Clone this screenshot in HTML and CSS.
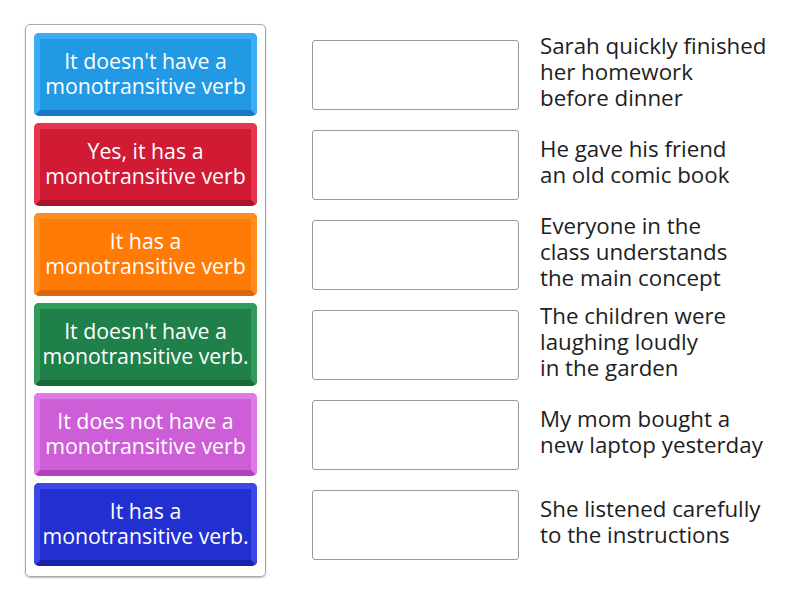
FILE: index.html
```html
<!DOCTYPE html>
<html>
<head>
<meta charset="utf-8">
<link rel="stylesheet" href="styles.css">
</head>
<body>
<div class="page">
  <div class="bank">
    <div class="tile blue">It doesn't have a<br>monotransitive verb</div>
    <div class="tile red">Yes, it has a<br>monotransitive verb</div>
    <div class="tile orange">It has a<br>monotransitive verb</div>
    <div class="tile green">It doesn't have a<br>monotransitive verb.</div>
    <div class="tile pink">It does not have a<br>monotransitive verb</div>
    <div class="tile navy">It has a<br>monotransitive verb.</div>
  </div>
  <div class="targets">
    <div class="row"><div class="slot"></div><div class="clue">Sarah quickly finished<br>her homework<br>before dinner</div></div>
    <div class="row"><div class="slot"></div><div class="clue">He gave his friend<br>an old comic book</div></div>
    <div class="row"><div class="slot"></div><div class="clue">Everyone in the<br>class understands<br>the main concept</div></div>
    <div class="row"><div class="slot"></div><div class="clue">The children were<br>laughing loudly<br>in the garden</div></div>
    <div class="row"><div class="slot"></div><div class="clue">My mom bought a<br>new laptop yesterday</div></div>
    <div class="row"><div class="slot"></div><div class="clue">She listened carefully<br>to the instructions</div></div>
  </div>
</div>
</body>
</html>
```

FILE: styles.css
```css
html, body {
  margin: 0;
  padding: 0;
  background: #ffffff;
}
body {
  font-family: "Open Sans", Lato, sans-serif;
  width: 800px;
  height: 600px;
  overflow: hidden;
}
.page {
  display: flex;
  padding: 24px 0 0 25px;
}
.bank {
  box-sizing: border-box;
  width: 241px;
  height: 553px;
  border: 1px solid #a9a9a9;
  border-radius: 5px;
  box-shadow: 0 1px 2px rgba(0,0,0,0.25);
  padding: 8px 8px;
  display: flex;
  flex-direction: column;
  gap: 7px;
}
.tile {
  box-sizing: border-box;
  height: 83px;
  border-radius: 5px;
  border-style: solid;
  border-width: 6px 6px 6px 6px;
  display: flex;
  align-items: center;
  justify-content: center;
  text-align: center;
  color: #ffffff;
  font-size: 21.3px;
  line-height: 25px;
  padding-bottom: 3px;
  white-space: nowrap;
}
.blue { background: #2299e4; border-color: #3aaef5 #3aaef5 #1779c6 #3aaef5; }
.red { background: #d11a33; border-color: #e6354c #e6354c #ad1328 #e6354c; }
.orange { background: #ff7b06; border-color: #ff8d22 #ff8d22 #dc6608 #ff8d22; }
.green { background: #20804a; border-color: #2f9a5a #2f9a5a #166a3a #2f9a5a; }
.pink { background: #cd5ed8; border-color: #de79e8 #de79e8 #b043bb #de79e8; }
.navy { background: #2230d2; border-color: #3a48e8 #3a48e8 #1922ad #3a48e8; }
.targets {
  margin-left: 46px;
  padding-top: 9px;
  display: flex;
  flex-direction: column;
  gap: 7px;
}
.row {
  height: 83px;
  display: flex;
  align-items: center;
}
.slot {
  box-sizing: border-box;
  width: 207px;
  height: 70px;
  border: 1.5px solid #9a9a9a;
  border-radius: 3px;
  background: #fff;
}
.clue {
  margin-left: 21px;
  font-size: 22.3px;
  line-height: 26px;
  color: #1e1e1e;
  margin-top: -6px;
  white-space: nowrap;
}
```
